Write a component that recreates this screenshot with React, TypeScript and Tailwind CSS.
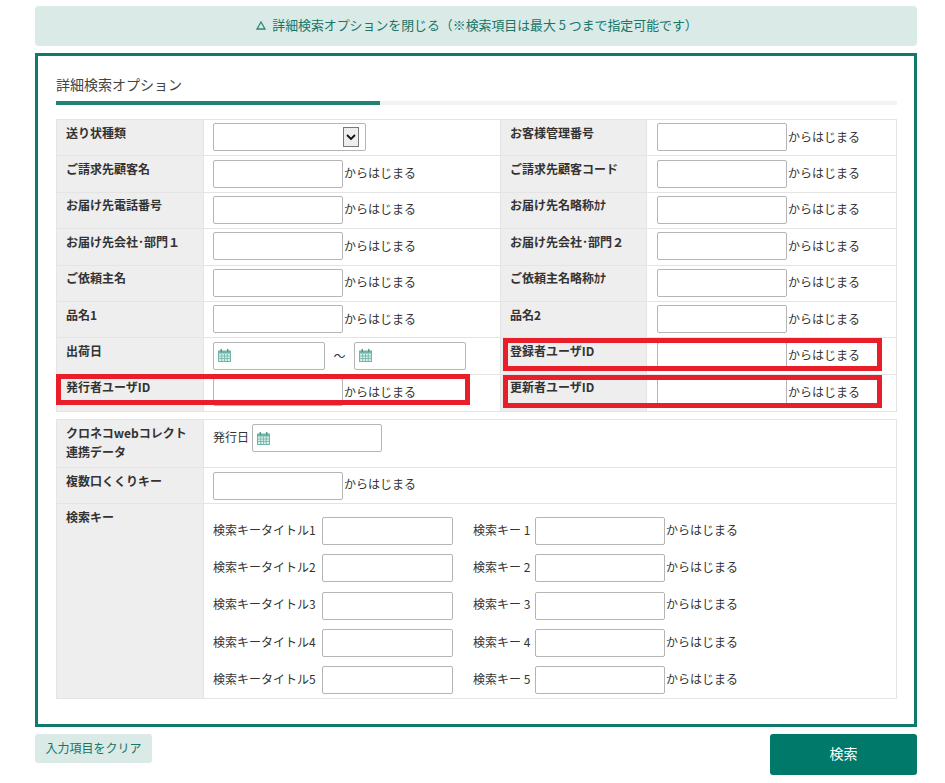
const fontStack = "font-['Meiryo','Noto_Sans_CJK_JP','Liberation_Sans',sans-serif]";

const rows = [
  ["ご請求先顧客名", "ご請求先顧客コード"],
  ["お届け先電話番号", "お届け先名略称ｶﾅ"],
  ["お届け先会社･部門１", "お届け先会社･部門２"],
  ["ご依頼主名", "ご依頼主名略称ｶﾅ"],
  ["品名1", "品名2"],
];

const searchKeys = [1, 2, 3, 4, 5];

function TextInput({ width = "w-[130px]" }: { width?: string }) {
  return (
    <input
      type="text"
      className={`h-[28px] ${width} shrink-0 rounded-[2px] border border-[#b5b5b5] bg-white`}
    />
  );
}

function Suffix({ lift = "mb-[1px]" }: { lift?: string }) {
  return <span className={`ml-[1px] ${lift} text-[12px] text-[#333]`}>からはじまる</span>;
}

function CalendarIcon() {
  return (
    <svg width="13" height="13" viewBox="0 0 13 13" className="shrink-0">
      <rect x="0" y="1.5" width="13" height="11.5" fill="#6fb5a8" />
      <rect x="2.5" y="0" width="1.5" height="3" fill="#4f9a8c" />
      <rect x="9" y="0" width="1.5" height="3" fill="#4f9a8c" />
      <rect x="1" y="4.5" width="11" height="7.5" fill="#d8ece8" />
      <path d="M1 7h11M1 9.5h11M3.7 4.5v7.5M6.5 4.5v7.5M9.3 4.5v7.5" stroke="#6fb5a8" strokeWidth="0.8" />
    </svg>
  );
}

function DateInput({ width }: { width: string }) {
  return (
    <div className={`flex h-[28px] ${width} items-center rounded-[2px] border border-[#b5b5b5] bg-white pl-[4px]`}>
      <CalendarIcon />
    </div>
  );
}

function Label({ children, wide, pad = "pt-[5px]" }: { children: React.ReactNode; wide?: boolean; pad?: string }) {
  return (
    <div
      className={`${wide ? "border-l" : ""} w-[147px] shrink-0 border-r border-[#e4e4e4] bg-[#eeeeee] pl-[9px] ${pad} text-[12px] font-bold leading-[16px] text-[#333]`}
    >
      {children}
    </div>
  );
}

function Row({ left, right, children }: { left: string; right?: string; children?: React.ReactNode }) {
  return (
    <div className="flex h-[36.4px] border-b border-[#e4e4e4] last:border-b-0">
      <Label pad="pt-[4.7px]">{left}</Label>
      <div className="flex w-[296px] shrink-0 items-center pb-[1px] pl-[9px]">
        {children ?? (
          <>
            <TextInput />
            <Suffix />
          </>
        )}
      </div>
      {right && (
        <>
          <Label wide pad="pt-[4.7px]">
            {right}
          </Label>
          <div className="flex flex-1 items-center pb-[1px] pl-[10px]">
            <TextInput />
            <Suffix />
          </div>
        </>
      )}
    </div>
  );
}

function RedBox({ className }: { className: string }) {
  return <div className={`pointer-events-none absolute border-[5px] border-[#e81f2b] ${className}`} />;
}

export default function App() {
  return (
    <div className={`${fontStack} relative min-h-[783px] w-[945px] bg-white pl-[35px] pt-[6px]`}>
      <div className="flex h-[40px] w-[882px] items-center justify-center gap-[6px] rounded-[4px] bg-[#d9eae7] pb-[2px] pl-[2px] text-[12.9px] text-[#1a7566]">
        <svg width="10" height="9" viewBox="0 0 10 9" className="shrink-0">
          <path d="M5 1L9 8H1z" fill="none" stroke="#2f8777" strokeWidth="1.3" />
        </svg>
        <span>詳細検索オプションを閉じる（※検索項目は最大 5 つまで指定可能です）</span>
      </div>

      <div className="mt-[7px] h-[674px] w-[882px] border-[3px] border-[#0f7a6c] pl-[18px] pr-[17px] pt-[18px]">
        <h2 className="text-[14px] leading-[20px] text-[#444]">詳細検索オプション</h2>
        <div className="mt-[7px] h-[4px] w-full bg-[#f2f2f2]">
          <div className="h-full w-[324px] bg-[#1f8273]" />
        </div>

        <div className="mt-[14px] border border-[#e4e4e4]">
          <Row left="送り状種類" right="お客様管理番号">
            <div className="relative">
              <select className="block h-[28px] w-[153px] appearance-none rounded-[2px] border border-[#b5b5b5] bg-white" />
              <div className="absolute right-[7px] top-[4px] flex h-[20px] w-[16px] items-center justify-center border border-[#777] bg-[#eeeeee]">
                <svg width="10" height="7" viewBox="0 0 10 7">
                  <path d="M1 1l4 4 4-4" fill="none" stroke="#111" strokeWidth="1.8" />
                </svg>
              </div>
            </div>
          </Row>
          {rows.map(([left, right]) => (
            <Row key={left} left={left} right={right} />
          ))}
          <Row left="出荷日" right="登録者ユーザID">
            <DateInput width="w-[112px]" />
            <span className="mx-[8px] w-[13px] text-center text-[12px] text-[#333]">～</span>
            <DateInput width="w-[112px]" />
          </Row>
          <Row left="発行者ユーザID" right="更新者ユーザID" />
        </div>

        <div className="mt-[7px] border border-[#e4e4e4]">
          <div className="flex h-[48px] border-b border-[#e4e4e4]">
            <Label>
              <span className="-mt-[2px] block leading-[19px]">
                クロネコwebコレクト
                <br />
                連携データ
              </span>
            </Label>
            <div className="flex items-start pl-[9px] pt-[4px]">
              <span className="mr-[3px] mt-[4px] text-[12px] text-[#333]">発行日</span>
              <DateInput width="w-[130px]" />
            </div>
          </div>
          <div className="flex h-[36px] border-b border-[#e4e4e4]">
            <Label>複数口くくりキー</Label>
            <div className="flex items-center pl-[9px]">
              <TextInput />
              <Suffix lift="mb-[3px]" />
            </div>
          </div>
          <div className="flex h-[194px]">
            <Label>検索キー</Label>
            <div className="flex flex-col gap-[9.3px] pl-[9px] pt-[13px]">
              {searchKeys.map((n) => (
                <div key={n} className="flex h-[28px] items-center text-[12px] text-[#333]">
                  <span className="mb-[3px] w-[109px]">検索キータイトル{n}</span>
                  <TextInput width="w-[131px]" />
                  <span className="mb-[3px] ml-[20px] w-[62px]">検索キー {n}</span>
                  <TextInput />
                  <Suffix lift="mb-[3px]" />
                </div>
              ))}
            </div>
          </div>
        </div>
      </div>

      <div className="mt-[7px] flex w-[882px] items-start justify-between">
        <button className="h-[29px] w-[117px] rounded-[3px] bg-[#d9eae7] pb-[2px] text-[12px] text-[#1a7566]">
          入力項目をクリア
        </button>
        <button className="h-[41px] w-[147px] rounded-[3px] bg-[#00796b] pb-[2px] text-[14px] text-white">検索</button>
      </div>

      <RedBox className="left-[56px] top-[374px] h-[31px] w-[414px]" />
      <RedBox className="left-[503px] top-[338px] h-[33px] w-[379px]" />
      <RedBox className="left-[503px] top-[375px] h-[33px] w-[379px]" />
    </div>
  );
}
